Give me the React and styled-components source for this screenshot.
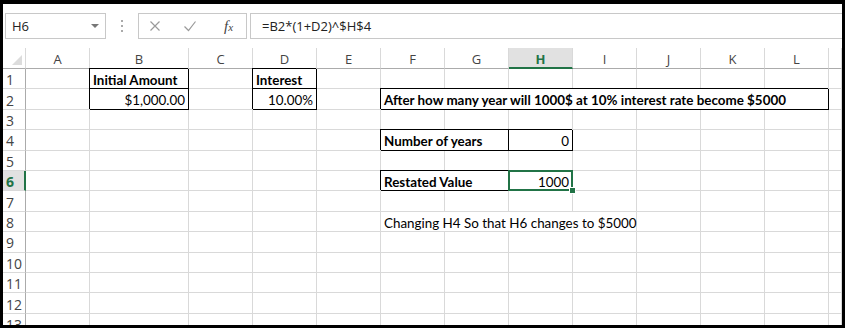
import React from 'react'
import styled, { createGlobalStyle, css } from 'styled-components'

const GREEN = '#217346'
const GRID = '#d9d9d9'

const GlobalStyle = createGlobalStyle`
  html, body {
    margin: 0;
    padding: 0;
    background: #000;
  }
  body {
    width: 845px;
    height: 328px;
    overflow: hidden;
  }
`

const Frame = styled.div`
  width: 845px;
  height: 328px;
  box-sizing: border-box;
  background: #000;
  padding: 4px 3px 3px 3px;
`

const Window = styled.div`
  height: 100%;
  background: #fff;
  overflow: hidden;
  display: flex;
  flex-direction: column;
`

const Toolbar = styled.div`
  flex: none;
  height: 44px;
  box-sizing: border-box;
  padding: 9px 0 0 2px;
  display: flex;
  align-items: flex-start;
  font-family: 'Open Sans', 'Noto Sans', sans-serif;
  font-size: 13px;
  color: #222;
`

const NameBox = styled.div`
  width: 101px;
  height: 26px;
  box-sizing: border-box;
  border: 1px solid #c8c8c8;
  display: flex;
  align-items: center;
  justify-content: space-between;
  padding: 0 6px 0 6px;
`

const Caret = styled.span`
  width: 0;
  height: 0;
  border-left: 4px solid transparent;
  border-right: 4px solid transparent;
  border-top: 4px solid #777;
`

const Dots = styled.div`
  width: 32px;
  height: 26px;
  display: flex;
  flex-direction: column;
  align-items: center;
  justify-content: center;
  gap: 3px;

  span {
    width: 2px;
    height: 2px;
    background: #aaa;
  }
`

const FxBox = styled.div`
  width: 109px;
  height: 26px;
  box-sizing: border-box;
  border: 1px solid #c8c8c8;
  display: flex;
  align-items: center;
  padding: 0 0 0 10px;
  gap: 22px;
`

const Fx = styled.span`
  font-family: 'Liberation Serif', 'DejaVu Serif', serif;
  font-style: italic;
  font-size: 15px;
  color: #444;
  margin-left: 5px;

  sub {
    font-size: 11px;
    vertical-align: 0;
  }
`

const Formula = styled.div`
  margin-left: 3px;
  flex: 1;
  height: 26px;
  box-sizing: border-box;
  border: 1px solid #c8c8c8;
  border-right: none;
  display: flex;
  align-items: center;
  padding-left: 11px;
`

const Sheet = styled.div`
  display: grid;
  grid-template-columns: 23px 64px 99px repeat(10, 64px) 1fr;
  grid-template-rows: 21px repeat(13, 20.42px);
  font-family: Lato, 'Open Sans', sans-serif;
  font-size: 13.4px;
  color: #000;
`

const Head = styled.div`
  box-sizing: border-box;
  border-right: 1px solid ${GRID};
  border-bottom: 1px solid #ababab;
  display: flex;
  align-items: center;
  justify-content: center;
  font-family: 'Open Sans', 'Noto Sans', sans-serif;
  font-size: 13px;
  color: #444;
  padding-top: 2px;
  ${({ $active }) =>
    $active &&
    css`
      background: #e1e1e1;
      color: ${GREEN};
      font-weight: 700;
      border-bottom: 2px solid ${GREEN};
    `}
`

const Corner = styled(Head)`
  justify-content: flex-end;
  align-items: flex-end;
  padding: 0 3px 3px 0;

  &::before {
    content: '';
    width: 0;
    height: 0;
    border-left: 10px solid transparent;
    border-bottom: 10px solid #dcdcdc;
  }
`

const RowHead = styled.div`
  box-sizing: border-box;
  border-right: 1px solid #ababab;
  border-bottom: 1px solid ${GRID};
  display: flex;
  align-items: center;
  padding: 2px 0 0 3px;
  font-family: 'Open Sans', 'Noto Sans', sans-serif;
  font-size: 14px;
  color: #444;
  ${({ $active }) =>
    $active &&
    css`
      background: #e1e1e1;
      color: ${GREEN};
      font-weight: 700;
      border-right: 2px solid ${GREEN};
    `}
`

const Cell = styled.div`
  position: relative;
  box-sizing: border-box;
  border-right: 1px solid ${GRID};
  border-bottom: 1px solid ${GRID};
  grid-column: span ${({ $span }) => $span || 1};
  display: flex;
  align-items: center;
  justify-content: ${({ $align }) => ($align === 'right' ? 'flex-end' : 'flex-start')};
  padding: 2px 3px 0 3px;
  white-space: nowrap;
  font-weight: ${({ $bold }) => ($bold ? 700 : 400)};
  ${({ $box }) =>
    $box &&
    css`
      border-right-color: #000;
      border-bottom-color: #000;
      box-shadow: -1px -1px 0 0 #000;
    `}
  ${({ $selected }) =>
    $selected &&
    css`
      &::after {
        content: '';
        position: absolute;
        inset: -1px -1px -1px -1px;
        border: 2px solid ${GREEN};
      }
      &::before {
        content: '';
        position: absolute;
        right: -3px;
        bottom: -3px;
        width: 5px;
        height: 5px;
        background: ${GREEN};
        outline: 1px solid #fff;
        z-index: 1;
      }
    `}
`

const COLS = ['A', 'B', 'C', 'D', 'E', 'F', 'G', 'H', 'I', 'J', 'K', 'L']

// cells with content, keyed "row:col"
const content = {
  '1:B': { text: 'Initial Amount', bold: true, box: true },
  '1:D': { text: 'Interest', bold: true, box: true },
  '2:B': { text: '$1,000.00', align: 'right', box: true },
  '2:D': { text: '10.00%', align: 'right', box: true },
  '2:F': {
    text: 'After how many year will 1000$ at 10% interest rate become $5000',
    bold: true,
    box: true,
    span: 7,
  },
  '4:F': { text: 'Number of years', bold: true, box: true, span: 2 },
  '4:H': { text: '0', align: 'right', box: true },
  '6:F': { text: 'Restated Value', bold: true, box: true, span: 2 },
  '6:H': { text: '1000', align: 'right', box: true, selected: true },
  '8:F': { text: 'Changing H4 So that H6 changes to $5000', span: 4 },
}

const buildRow = (r) => {
  const out = []
  let i = 0
  while (i < COLS.length) {
    const c = COLS[i]
    const d = content[`${r}:${c}`]
    const span = d?.span || 1
    out.push(
      <Cell
        key={c}
        $span={span}
        $bold={d?.bold}
        $align={d?.align}
        $box={d?.box}
        $selected={d?.selected}
      >
        {d?.text}
      </Cell>
    )
    i += span
  }
  out.push(<Cell key="rest" />)
  return out
}

const Cross = () => (
  <svg width="12" height="12" viewBox="0 0 12 12">
    <path d="M1.5 1.5l9 9M10.5 1.5l-9 9" stroke="#9a9a9a" strokeWidth="1.2" fill="none" />
  </svg>
)

const Check = () => (
  <svg width="14" height="12" viewBox="0 0 14 12">
    <path d="M1.5 6.5l4 4 7-9" stroke="#9a9a9a" strokeWidth="1.2" fill="none" />
  </svg>
)

export default function App() {
  const rows = Array.from({ length: 13 }, (_, i) => i + 1)
  return (
    <>
      <GlobalStyle />
      <Frame>
        <Window>
          <Toolbar>
            <NameBox>
              <span>H6</span>
              <Caret />
            </NameBox>
            <Dots>
              <span />
              <span />
              <span />
            </Dots>
            <FxBox>
              <Cross />
              <Check />
              <Fx>
                f<sub>x</sub>
              </Fx>
            </FxBox>
            <Formula>=B2*(1+D2)^$H$4</Formula>
          </Toolbar>
          <Sheet>
            <Corner />
            {COLS.map((c) => (
              <Head key={c} $active={c === 'H'}>
                {c}
              </Head>
            ))}
            <Head />
            {rows.map((r) => (
              <React.Fragment key={r}>
                <RowHead $active={r === 6}>{r}</RowHead>
                {buildRow(r)}
              </React.Fragment>
            ))}
          </Sheet>
        </Window>
      </Frame>
    </>
  )
}
